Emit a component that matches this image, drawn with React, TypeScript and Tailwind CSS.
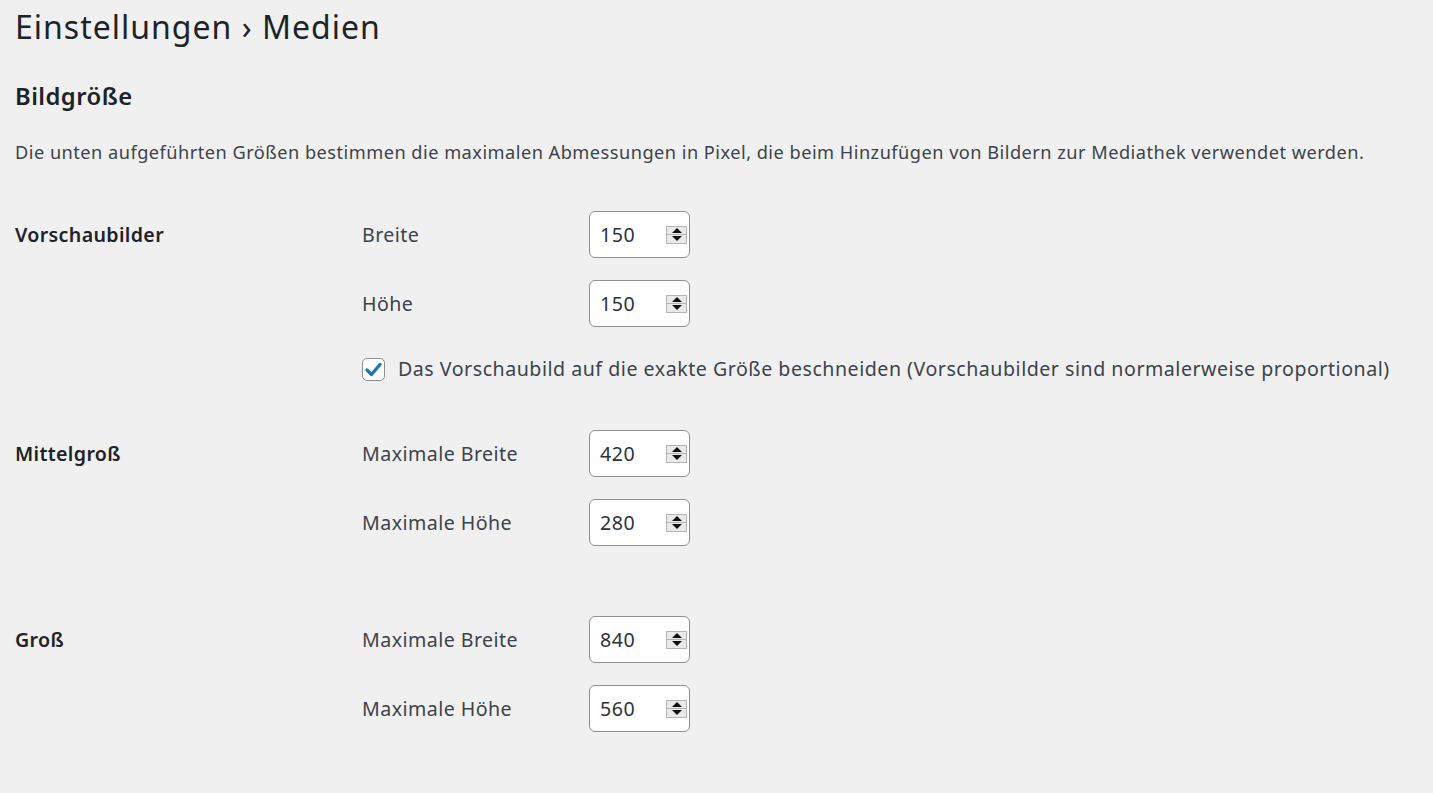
import React from "react";

const font = { fontFamily: '"Noto Sans", "Open Sans", sans-serif' };

function Spinner() {
  return (
    <div className="flex flex-col w-[21px] h-[18px] border border-[#b4b4b4] bg-[#e9e9e9]">
      <div className="flex-1 flex items-center justify-center border-b border-[#b4b4b4]">
        <svg width="10" height="5" viewBox="0 0 10 5"><polygon points="5,0 10,5 0,5" fill="#111" /></svg>
      </div>
      <div className="flex-1 flex items-center justify-center">
        <svg width="10" height="5" viewBox="0 0 10 5"><polygon points="0,0 10,0 5,5" fill="#111" /></svg>
      </div>
    </div>
  );
}

function NumberInput({ value }: { value: string }) {
  return (
    <div className="w-[101px] h-[47px] bg-white border border-[#8c8f94] rounded-[6px] flex items-center pl-[10px] pr-[2px]">
      <span className="flex-1 text-[19.6px] tracking-[0.5px] text-[#2c3338]">{value}</span>
      <Spinner />
    </div>
  );
}

function Row({ label, value, className = "" }: { label: string; value: string; className?: string }) {
  return (
    <div className={"flex items-center h-[47px] " + className}>
      <span className="w-[227px] text-[19.6px] tracking-[0.45px] text-[#3c434a]">{label}</span>
      <NumberInput value={value} />
    </div>
  );
}

function Section({ title, children, className = "" }: { title: string; children: React.ReactNode; className?: string }) {
  return (
    <div className={"flex " + className}>
      <div className="w-[347px] h-[47px] flex items-center text-[19.6px] tracking-[0.35px] font-semibold text-[#1d2327]">{title}</div>
      <div className="flex flex-col">{children}</div>
    </div>
  );
}

export default function App() {
  return (
    <div className="min-h-[793px] bg-[#f0f0f1] pl-[15px]" style={font}>
      <h1 className="text-[32px] leading-[44px] tracking-[1px] text-[#1d2327] pt-[5px]">Einstellungen › Medien</h1>
      <h2 className="text-[23.8px] font-semibold tracking-[0.45px] text-[#1d2327] leading-[32px] mt-[31px]">Bildgröße</h2>
      <p className="text-[18.2px] tracking-[0.48px] text-[#3c434a] leading-[28px] mt-[26px]">
        Die unten aufgeführten Größen bestimmen die maximalen Abmessungen in Pixel, die beim Hinzufügen von Bildern zur Mediathek verwendet werden.
      </p>
      <div className="flex flex-col mt-[45px]">
        <Section title="Vorschaubilder">
          <Row label="Breite" value="150" />
          <Row label="Höhe" value="150" className="mt-[22px]" />
          <div className="flex items-center h-[26px] mt-[29px]">
            <div className="w-[23px] h-[23px] bg-white border border-[#8c8f94] rounded-[5px] flex items-center justify-center">
              <svg width="17" height="15" viewBox="0 0 17 15">
                <path d="M2 8 L6.5 12.5 L15 2.5" fill="none" stroke="#2271b1" strokeWidth="3.2" strokeLinecap="round" strokeLinejoin="round" />
              </svg>
            </div>
            <span className="ml-[13px] text-[19.6px] tracking-[0.52px] text-[#3c434a]">
              Das Vorschaubild auf die exakte Größe beschneiden (Vorschaubilder sind normalerweise proportional)
            </span>
          </div>
        </Section>
        <Section title="Mittelgroß" className="mt-[48px]">
          <Row label="Maximale Breite" value="420" />
          <Row label="Maximale Höhe" value="280" className="mt-[22px]" />
        </Section>
        <Section title="Groß" className="mt-[70px]">
          <Row label="Maximale Breite" value="840" />
          <Row label="Maximale Höhe" value="560" className="mt-[22px]" />
        </Section>
      </div>
    </div>
  );
}
